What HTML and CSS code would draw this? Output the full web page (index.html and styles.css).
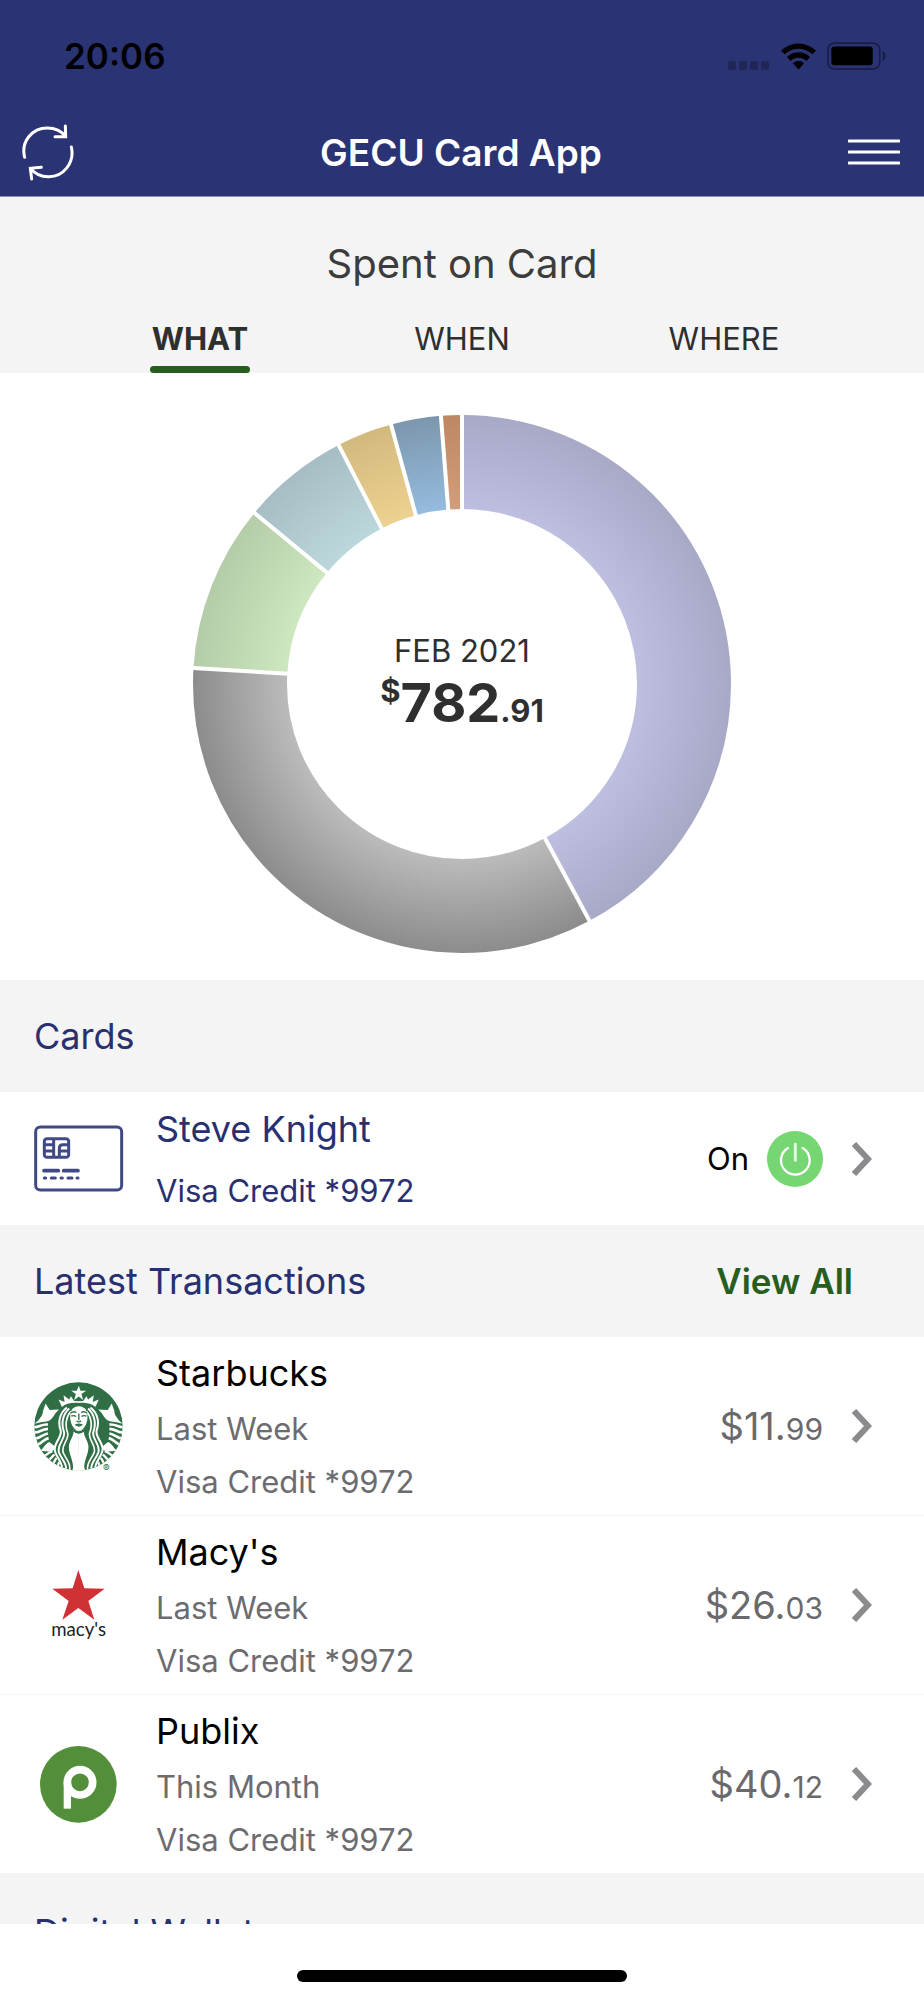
FILE: index.html
```html
<!DOCTYPE html>
<html lang="en">
<head>
<meta charset="utf-8">
<meta name="viewport" content="width=device-width, initial-scale=1">
<title>GECU Card App</title>
<link rel="stylesheet" href="styles.css">
</head>
<body>
<svg class="defs" aria-hidden="true">
  <symbol id="chevron" viewBox="0 0 20 34">
    <path d="M2 2 L16 17 L2 32" fill="none" stroke="#8b8b8f" stroke-width="6"/>
  </symbol>
</svg>
<div class="app">
  <header class="top">
    <div class="status">
      <time class="clock">20:06</time>
      <div class="status-icons">
        <svg class="dots" viewBox="0 0 42 9" aria-hidden="true"><g fill="#202757"><rect width="8" height="9" rx="2"/><rect x="11" width="8" height="9" rx="2"/><rect x="22" width="8" height="9" rx="2"/><rect x="33" width="8" height="9" rx="2"/></g></svg>
        <svg class="wifi" viewBox="957 126 106 81" aria-hidden="true">
          <path d="M957 149 A76 76 0 0 1 1063 149 L1052 160 A60 60 0 0 0 968 160 Z"/>
          <path d="M975 168 A50 50 0 0 1 1045 168 L1034 180 A34 34 0 0 0 986 180 Z"/>
          <path d="M993 187 A25 25 0 0 1 1027 187 L1010 206 Z"/>
        </svg>
        <svg class="battery" viewBox="1095 125 178 84" aria-hidden="true">
          <rect x="1098" y="128" width="156" height="78" rx="19" fill="none" stroke="#191e45" stroke-width="5"/>
          <rect x="1108" y="138" width="125" height="57" rx="9"/>
          <path d="M1263 153 Q1272 157 1272 167 Q1272 177 1263 181 Z" fill="#191e45"/>
        </svg>
      </div>
    </div>
    <div class="navbar">
      <button class="icon-btn" type="button" aria-label="Refresh">
        <svg class="refresh" viewBox="66 371 156 171" aria-hidden="true">
          <g fill="none" stroke="#fff" stroke-width="9" stroke-linecap="round" stroke-linejoin="miter">
            <path d="M74 471 C62 424 96 383 142 383 C164 383 184 392 196 408"/>
            <path d="M196 377 L197 409 L165 409"/>
            <path d="M214 440 C225 487 190 530 145 529 C122 529 104 520 92 504"/>
            <path d="M95 536 L91 504 L124 501"/>
          </g>
        </svg>
      </button>
      <h1 class="app-title">GECU Card App</h1>
      <button class="icon-btn" type="button" aria-label="Menu">
        <svg class="menu" viewBox="0 0 52 28" aria-hidden="true"><path d="M1 3H51M1 14H51M1 25H51" stroke="#fff" stroke-width="3" stroke-linecap="round"/></svg>
      </button>
    </div>
  </header>

  <main class="content">
    <section class="spent">
      <h2 class="spent-title">Spent on Card</h2>
      <div class="tabs" role="tablist">
        <button class="tab tab-active" type="button" role="tab" aria-selected="true">WHAT</button>
        <button class="tab" type="button" role="tab" aria-selected="false">WHEN</button>
        <button class="tab" type="button" role="tab" aria-selected="false">WHERE</button>
      </div>
    </section>

    <section class="chart">
      <svg class="donut" viewBox="-269 -269 538 538" aria-hidden="true">
        <defs>
          <radialGradient id="g1" gradientUnits="userSpaceOnUse" cx="0" cy="0" r="269"><stop offset=".65" stop-color="#bebee0"/><stop offset="1" stop-color="#a8a8c7"/></radialGradient>
          <radialGradient id="g2" gradientUnits="userSpaceOnUse" cx="0" cy="0" r="269"><stop offset=".65" stop-color="#bbbbbb"/><stop offset="1" stop-color="#8c8c8c"/></radialGradient>
          <radialGradient id="g3" gradientUnits="userSpaceOnUse" cx="0" cy="0" r="269"><stop offset=".65" stop-color="#cde7bf"/><stop offset="1" stop-color="#b4cca8"/></radialGradient>
          <radialGradient id="g4" gradientUnits="userSpaceOnUse" cx="0" cy="0" r="269"><stop offset=".65" stop-color="#bcd7dc"/><stop offset="1" stop-color="#a6bec3"/></radialGradient>
          <radialGradient id="g5" gradientUnits="userSpaceOnUse" cx="0" cy="0" r="269"><stop offset=".65" stop-color="#edd190"/><stop offset="1" stop-color="#d2b97d"/></radialGradient>
          <radialGradient id="g6" gradientUnits="userSpaceOnUse" cx="0" cy="0" r="269"><stop offset=".65" stop-color="#95bbdf"/><stop offset="1" stop-color="#7c97ac"/></radialGradient>
          <radialGradient id="g7" gradientUnits="userSpaceOnUse" cx="0" cy="0" r="269"><stop offset=".65" stop-color="#d39d79"/><stop offset="1" stop-color="#bd8764"/></radialGradient>
        </defs>
        <g fill="none" stroke-width="94" transform="rotate(-90)">
          <circle r="222" pathLength="360" stroke="url(#g1)" stroke-dasharray="151.7 360"/>
          <circle r="222" pathLength="360" stroke="url(#g2)" stroke-dasharray="0 151.7 121.7 360"/>
          <circle r="222" pathLength="360" stroke="url(#g3)" stroke-dasharray="0 273.4 36.1 360"/>
          <circle r="222" pathLength="360" stroke="url(#g4)" stroke-dasharray="0 309.5 23.2 360"/>
          <circle r="222" pathLength="360" stroke="url(#g5)" stroke-dasharray="0 332.7 12 360"/>
          <circle r="222" pathLength="360" stroke="url(#g6)" stroke-dasharray="0 344.7 10.8 360"/>
          <circle r="222" pathLength="360" stroke="url(#g7)" stroke-dasharray="0 355.5 4.5 360"/>
        </g>
        <g stroke="#fff" stroke-width="4">
          <path d="M0-170V-272"/>
          <path d="M0-170V-272" transform="rotate(151.7)"/>
          <path d="M0-170V-272" transform="rotate(273.4)"/>
          <path d="M0-170V-272" transform="rotate(309.5)"/>
          <path d="M0-170V-272" transform="rotate(332.7)"/>
          <path d="M0-170V-272" transform="rotate(344.7)"/>
          <path d="M0-170V-272" transform="rotate(355.5)"/>
        </g>
      </svg>
      <div class="total">
        <span class="period">FEB 2021</span>
        <strong class="amount"><span class="currency">$</span><span>782</span><span class="cents">.91</span></strong>
      </div>
    </section>

    <section>
      <div class="section-head"><h2 class="section-title">Cards</h2></div>
      <div class="row card-row">
        <svg class="logo" viewBox="101 430 267 267" aria-hidden="true">
          <g fill="none" stroke="#414985" stroke-width="9">
            <rect x="106" y="469" width="258" height="189" rx="14"/>
            <rect x="132" y="504" width="73" height="56" rx="8"/>
            <path d="M131 522H160M131 541H160M160 503V561M206 522H188Q177 522 177 533V561M177 541H206"/>
            <path d="M131 600H174M190 600H233" stroke-width="11" stroke-linecap="round"/>
            <path d="M132 622h4M153 622h12M182 622h4M203 622h12M230 622h3" stroke-linecap="round"/>
          </g>
        </svg>
        <div class="info owner">
          <span class="name">Steve Knight</span>
          <span class="detail">Visa Credit *9972</span>
        </div>
        <span class="state" id="card-state">On</span>
        <button class="power" type="button" aria-label="Turn card off" aria-describedby="card-state">
          <svg class="power-icon" viewBox="918 152 168 168" aria-hidden="true"><g fill="none" stroke="#fff" stroke-linecap="round"><path d="M981 203 A43 43 0 1 0 1025 203" stroke-width="7"/><path d="M1003 191V240" stroke-width="9" stroke="#e3f8e1"/></g></svg>
        </button>
        <svg class="chevron" aria-hidden="true"><use href="#chevron"/></svg>
      </div>
    </section>

    <section>
      <div class="section-head">
        <h2 class="section-title">Latest Transactions</h2>
        <a class="view-all" href="#all">View All</a>
      </div>
      <div class="row">
        <svg class="logo" viewBox="42 123 268 268" aria-hidden="true">
          <defs>
            <clipPath id="disc"><circle cx="176" cy="257" r="133"/></clipPath>
            <g id="half" fill="none" stroke="#fff" stroke-width="6">
              <path d="M77 188 L89 207 L118 206 C104 216 102 230 90 238 C76 245 60 242 44 249 C58 236 70 222 69 210 Z" fill="#fff" stroke="none"/>
              <path d="M40 259C56 262 62 249 84 251M42 275C58 277 66 264 84 264M46 293C60 293 68 280 84 278M53 311C66 308 70 296 86 292" stroke-width="8"/>
              <path d="M60 330C72 324 74 310 88 304L106 318C104 330 96 332 86 332" fill="#fff" stroke="none"/>
              <path d="M72 345C84 342 88 332 98 332M84 360C94 354 96 346 104 342M97 374C104 364 104 358 110 352M110 386C116 376 114 370 118 364" stroke-width="7"/>
              <path d="M141 200C118 218 114 246 122 268S96 308 106 334S130 366 126 396"/>
              <path d="M148 203C127 222 124 250 132 272S107 312 118 337S142 368 138 396"/>
              <path d="M153 211C138 228 135 254 143 275S119 315 131 338S153 368 149 396" stroke-width="5"/>
              <path d="M177 270L161 266C164 286 147 300 147 318C147 345 164 360 159 396H177Z" fill="#fff" stroke="none"/>
              <path d="M177 186C155 184 138 188 126 198L116 176L134 183L131 163L148 176L153 166L163 180L177 181Z" fill="#fff" stroke="none"/>
            </g>
          </defs>
          <g clip-path="url(#disc)">
            <rect x="42" y="123" width="268" height="268" fill="#306f46"/>
            <use href="#half"/>
            <use href="#half" transform="translate(353 0) scale(-1 1)"/>
            <path d="M177 134L182 149H199L185 159L190 177L177 167L163 177L168 159L154 149H171Z" fill="#fff"/>
            <path d="M177 196C158 196 150 211 151 232C152 251 164 269 177 270C190 269 202 251 203 232C204 211 196 196 177 196Z" fill="#fff"/>
            <g fill="none" stroke="#306f46" stroke-width="4"><path d="M152 217Q161 209 170 215M184 215Q193 209 202 217M154 226Q162 222 169 227M185 227Q192 222 200 226M177 218V238M170 241Q177 245 184 241"/><path d="M168 252Q177 248 186 252Q177 259 168 252Z" fill="#306f46"/></g>
            <path d="M161 268Q176 282 193 268" fill="none" stroke="#306f46" stroke-width="7"/>
            <path d="M156 392L176 340L198 392Z" fill="#fff"/>
          </g>
          <text class="registered" x="250" y="393">®</text>
        </svg>
        <div class="info">
          <span class="name">Starbucks</span>
          <span class="detail">Last Week</span>
          <span class="detail">Visa Credit *9972</span>
        </div>
        <span class="price">$11.<span class="price-cents">99</span></span>
        <svg class="chevron" aria-hidden="true"><use href="#chevron"/></svg>
      </div>
      <div class="row">
        <svg class="logo" viewBox="42 117 267 267" aria-hidden="true">
          <path d="M175 144L193 199L254 200L205 237L223 293L175 258L127 293L146 237L97 200L158 199Z" fill="#cf3134"/>
          <text class="macys" x="176" y="342" text-anchor="middle">macy's</text>
        </svg>
        <div class="info">
          <span class="name">Macy's</span>
          <span class="detail">Last Week</span>
          <span class="detail">Visa Credit *9972</span>
        </div>
        <span class="price">$26.<span class="price-cents">03</span></span>
        <svg class="chevron" aria-hidden="true"><use href="#chevron"/></svg>
      </div>
      <div class="row">
        <svg class="logo" viewBox="42 658 267 267" aria-hidden="true">
          <circle cx="175" cy="791" r="115" fill="#538e3a"/>
          <circle cx="180" cy="785" r="38" fill="none" stroke="#fff" stroke-width="23"/>
          <path d="M131 785H153V864H131Z" fill="#fff"/>
        </svg>
        <div class="info">
          <span class="name">Publix</span>
          <span class="detail">This Month</span>
          <span class="detail">Visa Credit *9972</span>
        </div>
        <span class="price">$40.<span class="price-cents">12</span></span>
        <svg class="chevron" aria-hidden="true"><use href="#chevron"/></svg>
      </div>
    </section>

    <section>
      <div class="section-head wallet-head"><h2 class="section-title">Digital Wallet</h2></div>
    </section>
  </main>

  <footer class="home"><div class="home-bar"></div></footer>
</div>
</body>
</html>
```

FILE: styles.css
```css
* { box-sizing: border-box; }
body {
  margin: 0;
  font-family: Inter, "Liberation Sans", sans-serif;
  color: #000;
  background: #fff;
}
h1, h2 { margin: 0; font-weight: 400; }
button { border: 0; padding: 0; background: none; font: inherit; color: inherit; cursor: pointer; }
svg { display: block; flex: none; }
.defs { position: absolute; width: 0; height: 0; }

.app { display: flex; flex-direction: column; height: 100vh; }

.top { flex: none; background: #2a3373; border-bottom: 1px solid #8d90b5; }
.status { display: flex; justify-content: space-between; align-items: center; height: 112px; padding: 0 38px 0 64px; }
.clock { font-size: 35px; font-weight: 600; }
.status-icons { display: flex; align-items: center; gap: 11px; }
.dots { width: 42px; height: 9px; align-self: flex-end; }
.wifi { width: 35px; height: 27px; }
.battery { width: 59px; height: 28px; }
.navbar { display: flex; justify-content: space-between; align-items: center; height: 84px; padding: 0 24px 4px 22px; color: #fff; }
.icon-btn { display: flex; }
.refresh { width: 52px; height: 57px; }
.menu { width: 52px; height: 28px; }
.app-title { font-size: 37px; font-weight: 600; }

.content { flex: 1; min-height: 0; overflow: hidden; }

.spent { background: #f4f4f4; color: #2f2f2f; }
.spent-title { padding-top: 43px; font-size: 40px; line-height: 48px; text-align: center; color: #3c3c3c; }
.tabs { display: grid; grid-template-columns: repeat(3, 1fr); justify-items: center; padding: 25px 69px 0; }
.tab { display: flex; flex-direction: column; justify-content: flex-start; height: 60px; padding: 8px 0 0; font-size: 31px; line-height: 36px; }
.tab-active { font-weight: 700; }
.tab-active::after { content: ""; flex: none; height: 7px; margin: 9px -2px 0; border-radius: 4px; background: #275d1e; }

.chart { display: grid; place-items: center; padding: 42px 0 27px; color: #2f2f2f; }
.donut { grid-area: 1 / 1; width: 538px; height: 538px; }
.total { grid-area: 1 / 1; display: flex; flex-direction: column; align-items: center; padding-top: 6px; }
.period { font-size: 31px; line-height: 40px; }
.amount { display: flex; align-items: baseline; font-size: 54px; line-height: 64px; font-weight: 700; }
.currency { align-self: flex-start; font-size: 31px; line-height: 40px; }
.cents { font-size: 31px; }

.section-head { display: flex; align-items: center; justify-content: space-between; height: 112px; padding: 0 71px 0 34px; background: #f4f4f4; }
.wallet-head { height: 118px; }
.section-title { font-size: 36px; line-height: 44px; color: #28306f; }
.view-all { font-size: 35px; font-weight: 600; color: #275d1e; text-decoration: none; }

.row { display: flex; align-items: center; height: 179px; padding: 0 52px 0 34px; border-bottom: 1px solid #f4f4f4; }
.row:last-child { height: 178px; border-bottom: 0; }
.row.card-row { height: 133px; }
.logo { width: 89px; height: 89px; overflow: visible; }
.info { flex: 1; display: flex; flex-direction: column; padding-left: 33px; }
.name { font-size: 36px; line-height: 58px; }
.detail { font-size: 31px; line-height: 53px; color: #6c6c70; }
.owner { gap: 6px; color: #28306f; }
.owner .detail { color: #28306f; }
.state { font-size: 31px; margin-right: 18px; }
.power { width: 56px; height: 56px; border-radius: 50%; background: #76d672; }
.power-icon { width: 56px; height: 56px; }
.chevron { width: 20px; height: 34px; margin-left: 29px; }
.price { font-size: 38px; color: #6a6a6e; }
.price-cents { font-size: 30px; }
.macys { font-family: Lato, sans-serif; font-size: 56px; fill: #222; }
.registered { font-size: 30px; fill: #306f46; }

.home { flex: none; display: flex; justify-content: center; align-items: flex-end; height: 76px; padding-bottom: 18px; background: #fff; }
.home-bar { width: 330px; height: 12px; border-radius: 6px; background: #000; }
```
